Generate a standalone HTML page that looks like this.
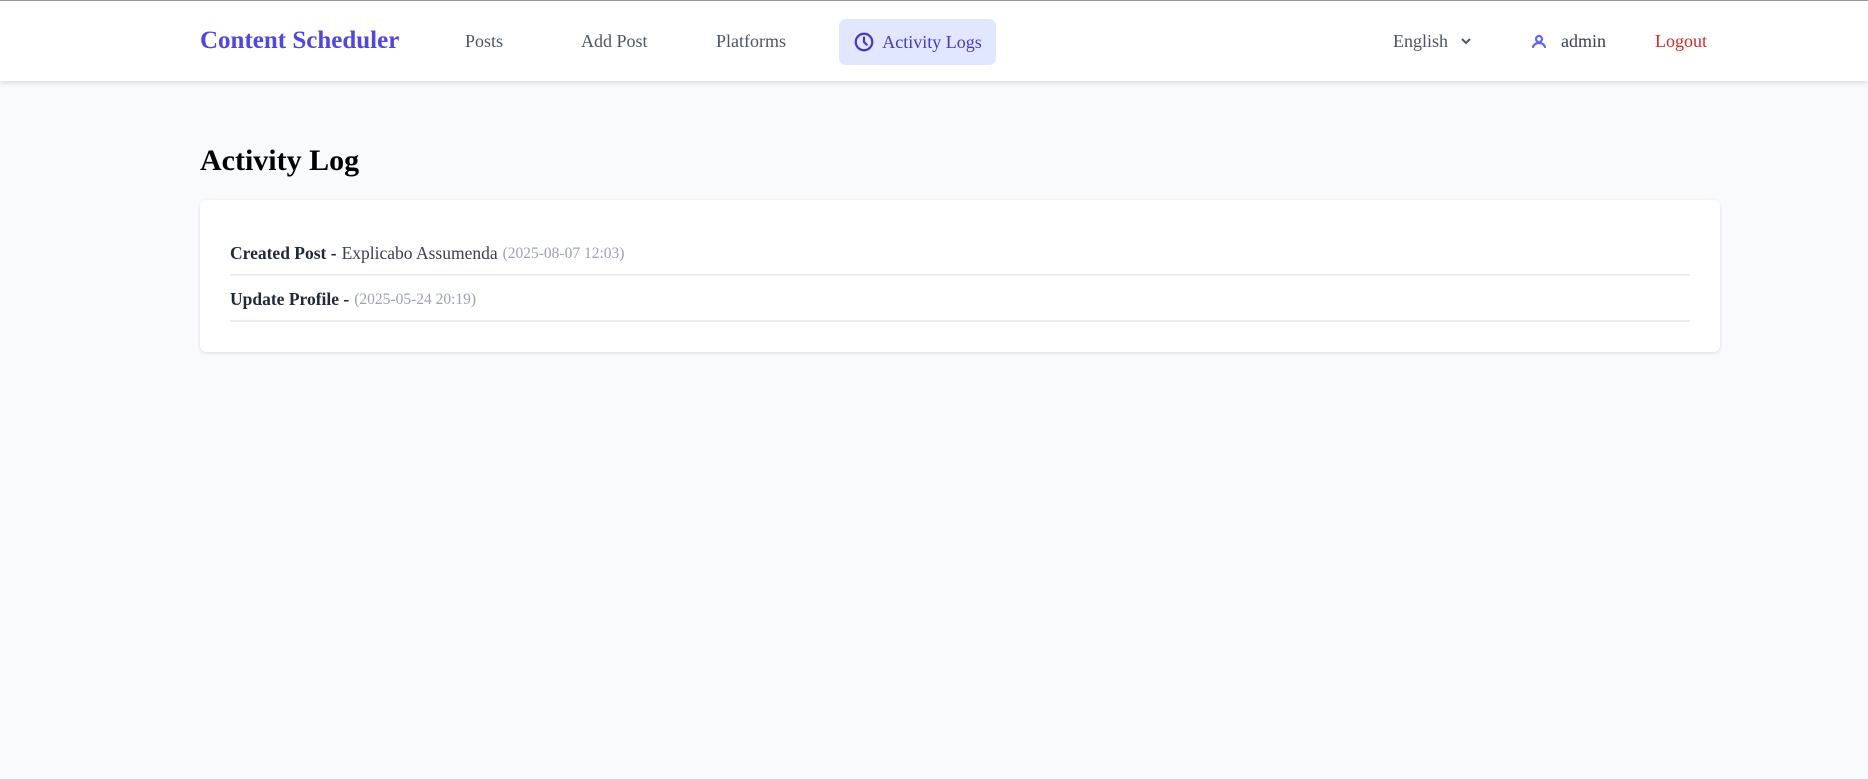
<!DOCTYPE html>
<html><head><meta charset="utf-8"><style>
*{box-sizing:border-box;margin:0;padding:0}
body{width:1868px;height:779px;background:#f9fafb;font-family:"Liberation Serif",serif;overflow:hidden;border-top:1px solid #9a9a9a}
nav{height:80px;background:#fff;box-shadow:0 2px 5px rgba(0,0,0,.12);position:relative}
.a{position:absolute;top:0;height:80px;display:flex;align-items:center;font-size:18px;color:#4b5563}
.logo{left:200px;font-size:25px;font-weight:bold;color:#4f46e5}
.pill{left:839px;top:18px;height:46px;width:157px;background:#e0e7ff;border-radius:7px;color:#4338ca;justify-content:center;gap:7px}
h1{position:absolute;left:200px;top:144px;font-size:30px;font-weight:bold;color:#000}
.card{position:absolute;left:200px;top:200px;width:1520px;height:152px;background:#fff;border-radius:6px;box-shadow:0 1px 3px rgba(0,0,0,.12);padding:30px 30px}
.row{height:46px;border-bottom:2px solid #eceef1;display:flex;align-items:center;font-size:17.5px;color:#374151;padding-top:3px}
.row b{color:#1f2937;margin-right:5px}
.t{color:#9ca3af;font-size:15.5px;margin-left:5px}
</style></head><body>
<nav>
<div class="a logo">Content Scheduler</div>
<div class="a" style="left:465px">Posts</div>
<div class="a" style="left:581px">Add Post</div>
<div class="a" style="left:716px">Platforms</div>
<div class="a pill"><svg width="22" height="22" viewBox="0 0 24 24" fill="none" stroke="#4338ca" stroke-width="2.4" stroke-linecap="round"><circle cx="12" cy="12" r="9"/><path d="M12 7v5l3 3"/></svg>Activity Logs</div>
<div class="a" style="left:1393px">English</div>
<div class="a" style="left:1459px"><svg width="14" height="14" viewBox="0 0 14 14" fill="none" stroke="#4b5563" stroke-width="2"><path d="M3 5l4 4 4-4"/></svg></div>
<div class="a" style="left:1530px"><svg width="18" height="18" viewBox="0 0 18 18" fill="none" stroke="#6366f1" stroke-width="2.2" stroke-linecap="round"><circle cx="9" cy="7" r="3"/><path d="M3 15c1-3 3-4 6-4s5 1 6 4"/></svg></div>
<div class="a" style="left:1561px;color:#374151">admin</div>
<div class="a" style="left:1655px;color:#dc2626">Logout</div>
</nav>
<h1>Activity Log</h1>
<div class="card">
<div class="row"><b>Created Post -</b> Explicabo Assumenda <span class="t">(2025-08-07 12:03)</span></div>
<div class="row"><b>Update Profile -</b><span class="t" style="margin-left:0">(2025-05-24 20:19)</span></div>
</div>
</body></html>
